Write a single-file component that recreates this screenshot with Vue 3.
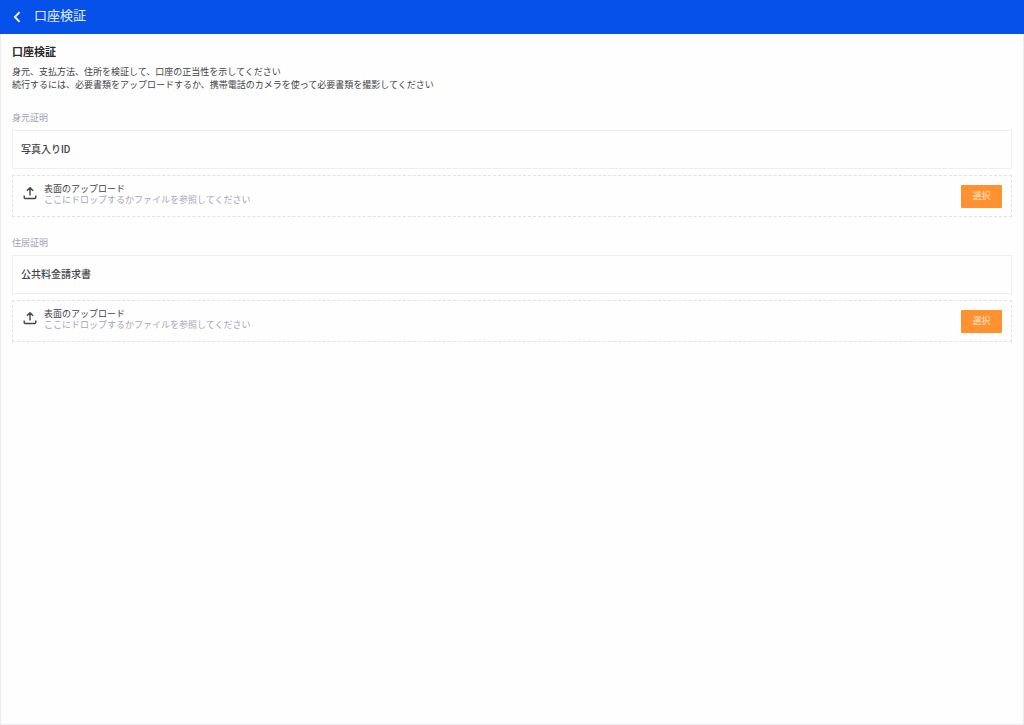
<script setup>
const sections = [
  { id: 'identity', label: '身元証明', document: '写真入りID' },
  { id: 'residence', label: '住居証明', document: '公共料金請求書' },
]
</script>

<template>
  <div class="page">
    <header class="topbar">
      <button class="back" type="button" aria-label="戻る">
        <svg viewBox="0 0 8 12" width="8" height="12" fill="none" stroke="currentColor" stroke-width="1.8">
          <path d="M6.6 1.2 1.8 6l4.8 4.8" />
        </svg>
      </button>
      <span class="topbar-title">口座検証</span>
    </header>
    <main class="content">
      <h1>口座検証</h1>
      <p class="intro">
        身元、支払方法、住所を検証して、口座の正当性を示してください<br />
        続行するには、必要書類をアップロードするか、携帯電話のカメラを使って必要書類を撮影してください
      </p>
      <section v-for="s in sections" :key="s.id" class="section" :aria-labelledby="s.id">
        <h2 :id="s.id">{{ s.label }}</h2>
        <div class="document">{{ s.document }}</div>
        <div class="upload">
          <svg class="upload-icon" viewBox="0 0 14 14" width="14" height="14" fill="none" stroke="currentColor" stroke-width="1.4">
            <path d="M7 9.6V1.8M3.9 4.8 7 1.7l3.1 3.1M1.2 9.4v2q0 1.1 1.1 1.1h9.4q1.1 0 1.1-1.1v-2" />
          </svg>
          <div class="upload-text">
            <div class="upload-title">表面のアップロード</div>
            <div class="upload-hint">ここにドロップするかファイルを参照してください</div>
          </div>
          <button class="select" type="button">選択</button>
        </div>
      </section>
    </main>
  </div>
</template>

<style>
body {
  background: #fefefe;
}
</style>

<style scoped>
.page {
  box-sizing: border-box;
  min-height: 100vh;
  border: 1px solid #ebebed;
  border-top: 0;
  background: #fefefe;
  color: #444446;
  font-family: Roboto, "Noto Sans CJK JP", sans-serif;
  font-size: 9px;
  line-height: 13px;
}
.topbar {
  display: flex;
  align-items: center;
  height: 34px;
  margin: 0 -1px;
  padding-left: 13px;
  background: #0651ea;
  color: #fff;
}
.back {
  display: flex;
  margin: 0;
  padding: 0;
  border: 0;
  background: none;
  color: inherit;
}
.topbar-title {
  margin-left: 13px;
  padding-bottom: 2px;
  color: #e3edff;
  font-size: 13px;
  line-height: 18px;
}
.content {
  padding: 11px 11px 10px;
}
h1 {
  margin: 0 0 5px;
  color: #2a2a2a;
  font-size: 11px;
  font-weight: 700;
  line-height: 16px;
}
.intro {
  margin: 0;
}
.section {
  margin-top: 20px;
}
h2 {
  margin: 0 0 5px;
  color: #a2a2b4;
  font-size: 9px;
  font-weight: 400;
  line-height: 13px;
}
.document {
  box-sizing: border-box;
  padding: 11px 8px 10px;
  border: 1px solid #eeeef0;
  border-radius: 1px;
  font-size: 10px;
  font-weight: 500;
  line-height: 16px;
}
.upload {
  display: flex;
  align-items: center;
  box-sizing: border-box;
  min-height: 42px;
  margin-top: 6px;
  padding: 0 9px 0 10px;
  border: 1px dashed #e2e2e6;
  border-radius: 1px;
}
.upload-icon {
  flex: none;
  margin-bottom: 6px;
}
.upload-text {
  flex: 1;
  margin-left: 7px;
  padding-bottom: 2px;
  line-height: 11px;
}
.upload-hint {
  color: #a6a6b6;
}
.select {
  width: 41px;
  height: 23px;
  padding: 0;
  border: 0;
  border-radius: 1px;
  background: #ff9130;
  color: #ffe6cf;
  font: inherit;
}
</style>
